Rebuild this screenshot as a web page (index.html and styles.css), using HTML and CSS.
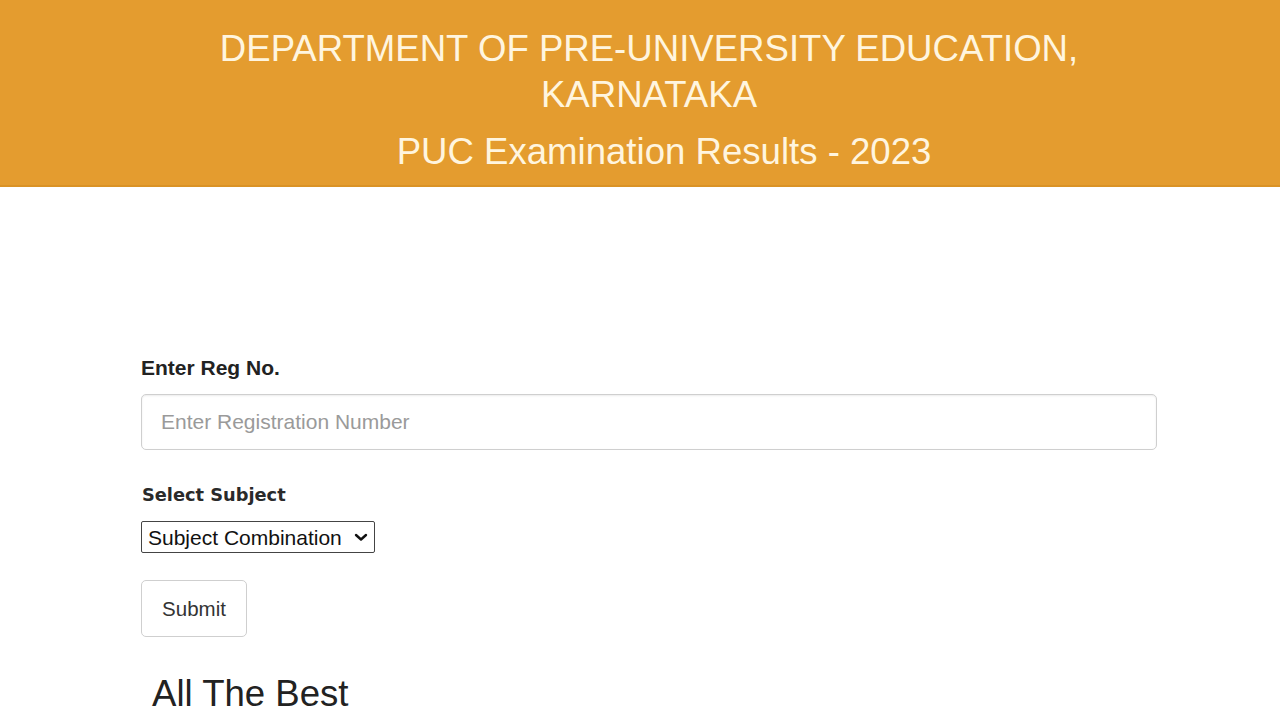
FILE: index.html
```html
<!DOCTYPE html>
<html lang="en">
<head>
<meta charset="utf-8">
<title>PUC Examination Results - 2023</title>
<link rel="stylesheet" href="styles.css">
</head>
<body>
<header class="banner">
  <h1 class="dept">DEPARTMENT OF PRE-UNIVERSITY EDUCATION,<br>KARNATAKA</h1>
  <h2 class="exam">PUC Examination Results - 2023</h2>
</header>
<main class="content">
  <form class="result-form" onsubmit="return false;">
    <div class="field field-reg">
      <label class="label" for="reg">Enter Reg No.</label>
      <input class="text-input" id="reg" type="text" placeholder="Enter Registration Number">
    </div>
    <div class="field field-sub">
      <label class="label label-alt" for="sub">Select Subject</label>
      <div class="select-wrap">
        <select class="select" id="sub">
          <option>Subject Combination</option>
        </select>
        <svg class="chevron" width="14" height="9" viewBox="0 0 14 9" aria-hidden="true">
          <path d="M2 2 L7 6.5 L12 2" fill="none" stroke="#111" stroke-width="2.4" stroke-linecap="round" stroke-linejoin="round"/>
        </svg>
      </div>
    </div>
    <button class="btn" type="submit">Submit</button>
  </form>
  <p class="wish">All The Best</p>
</main>
</body>
</html>
```
FILE: styles.css
```css
html, body {
  margin: 0;
  padding: 0;
  background: #ffffff;
  font-family: "Liberation Sans", Arial, sans-serif;
  color: #333;
}
.banner {
  background: #e49c2f;
  height: 187px;
  box-sizing: border-box;
  padding-top: 26px;
  text-align: center;
  color: #fff5df;
  border-bottom: 2px solid #da9225;
}
.dept {
  margin: 0;
  padding-left: 18px;
  font-weight: normal;
  font-size: 36.6px;
  line-height: 46px;
}
.exam {
  margin: 11px 0 0;
  padding-left: 48px;
  font-weight: normal;
  font-size: 36.6px;
  line-height: 46px;
}
.content {
  padding: 169px 123px 0 141px;
}
.result-form {
  display: flex;
  flex-direction: column;
  align-items: flex-start;
}
.field {
  display: flex;
  flex-direction: column;
  align-items: flex-start;
  width: 100%;
}
.field-reg {
  margin-bottom: 33px;
}
.field-sub {
  margin-bottom: 27px;
}
.label {
  font-weight: bold;
  font-size: 21px;
  line-height: 24px;
  color: #222;
  margin-bottom: 14px;
}
.label-alt {
  font-family: "DejaVu Sans", Verdana, sans-serif;
  font-size: 17.8px;
  color: #2a2a2a;
  padding-left: 1px;
}
.text-input {
  width: 100%;
  box-sizing: border-box;
  height: 56px;
  padding: 0 19px;
  font-family: "Liberation Sans", Arial, sans-serif;
  font-size: 21px;
  border: 1px solid #cfcfcf;
  border-radius: 5px;
  box-shadow: inset 0 1px 2px rgba(0,0,0,0.08);
  color: #333;
}
.text-input::placeholder {
  color: #9a9a9a;
}
.select-wrap {
  position: relative;
  display: inline-block;
}
.select {
  appearance: none;
  -webkit-appearance: none;
  font-family: "Liberation Sans", Arial, sans-serif;
  font-size: 21px;
  width: 234px;
  height: 32px;
  color: #111;
  border: 1px solid #444;
  border-radius: 2px;
  background: #fff;
  padding: 0 0 0 6px;
  margin: 0;
  display: block;
}
.chevron {
  position: absolute;
  right: 7px;
  top: 12px;
  pointer-events: none;
}
.btn {
  font-family: "Liberation Sans", Arial, sans-serif;
  font-size: 20.5px;
  color: #333;
  background: #fff;
  border: 1px solid #cfcfcf;
  border-radius: 5px;
  width: 106px;
  height: 57px;
  padding: 0;
}
.wish {
  margin: 36px 0 0 11px;
  font-size: 36.6px;
  line-height: 42px;
  color: #222;
}
```
